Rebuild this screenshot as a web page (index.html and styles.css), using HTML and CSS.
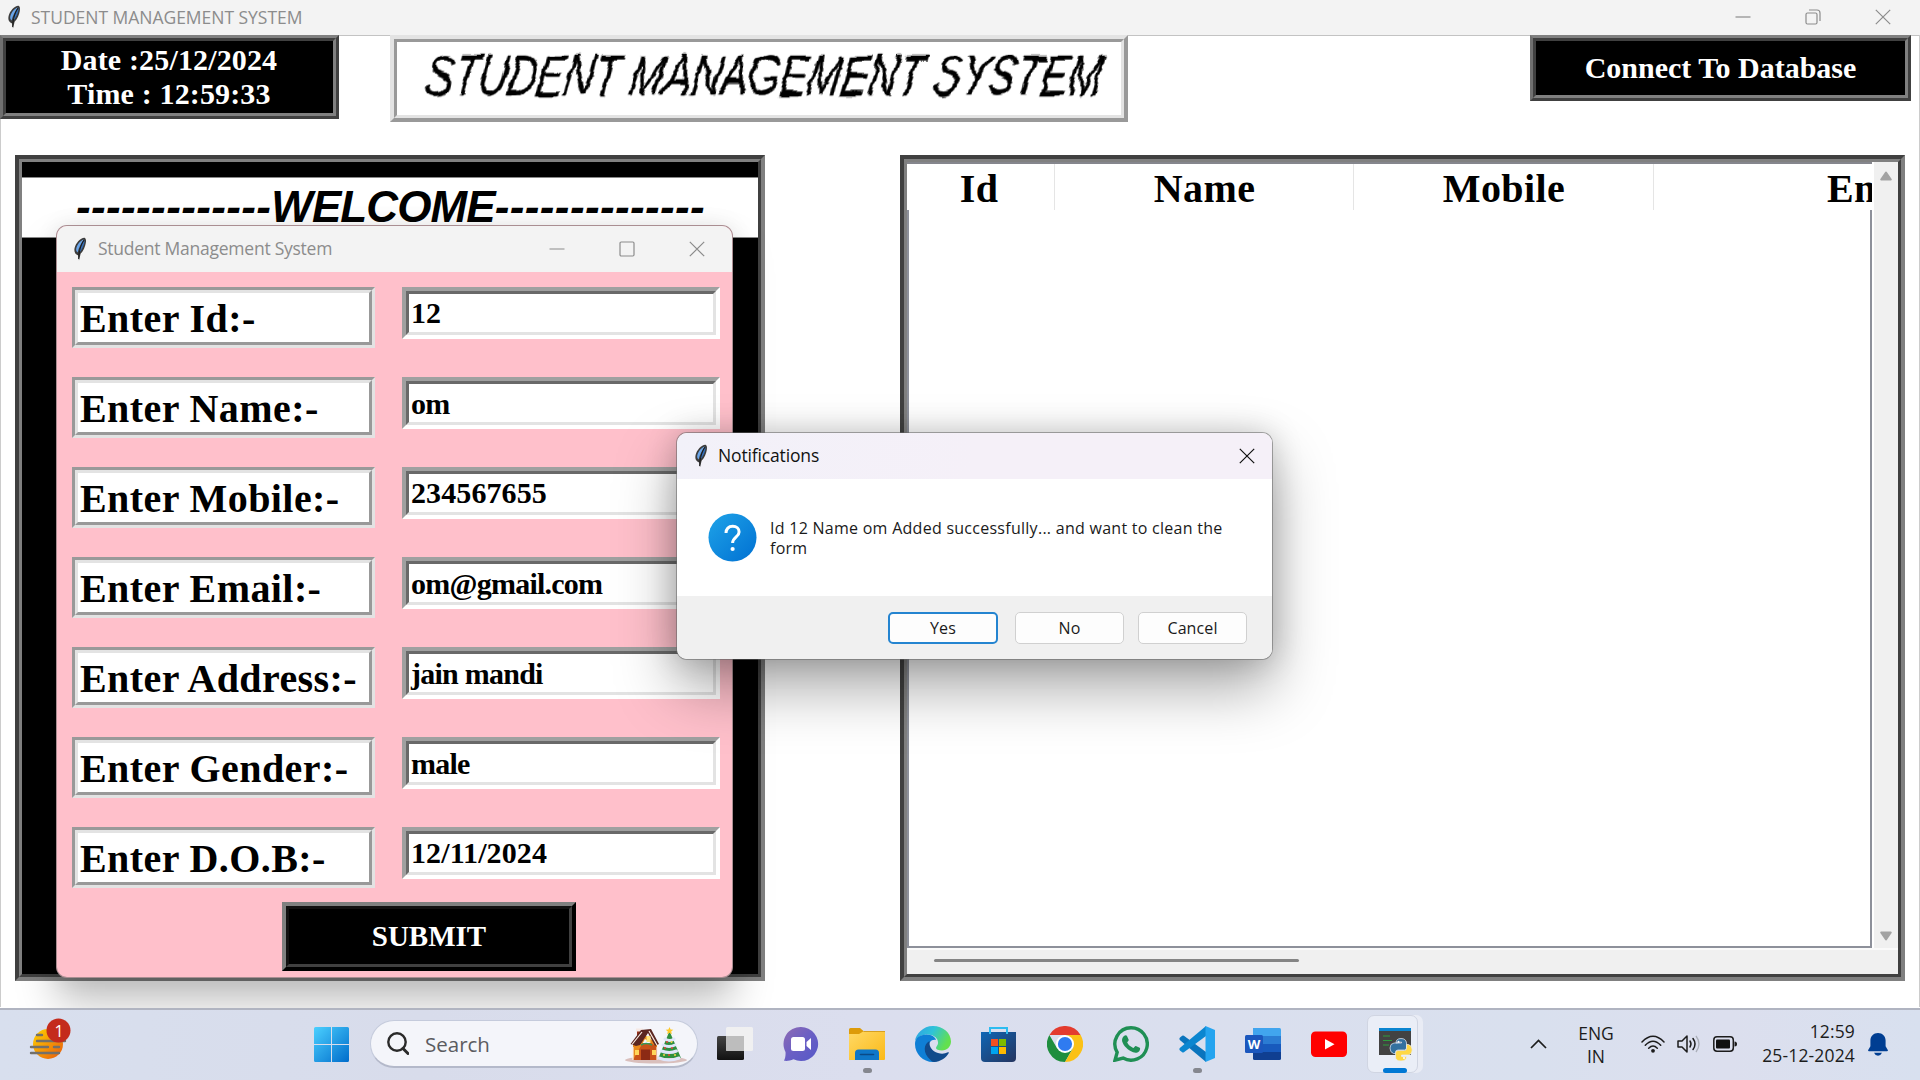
FILE: index.html
```html
<!DOCTYPE html>
<html lang="en">
<head>
<meta charset="utf-8">
<title>STUDENT MANAGEMENT SYSTEM</title>
<link rel="stylesheet" href="styles.css">
</head>
<body>
<svg class="defs" aria-hidden="true">
  <defs>
    <linearGradient id="gWin" x1="0" y1="0" x2="1" y2="1"><stop offset="0" stop-color="#4bd0ff"/><stop offset="1" stop-color="#006ccb"/></linearGradient>
    <linearGradient id="gSun" x1="0" y1="0" x2="1" y2="1"><stop offset="0" stop-color="#ffd400"/><stop offset="1" stop-color="#e8590c"/></linearGradient>
    <linearGradient id="gAsk" x1="0" y1="0" x2="1" y2="1"><stop offset="0" stop-color="#1fa3e8"/><stop offset="1" stop-color="#0070d2"/></linearGradient>
    <linearGradient id="gChat" x1="0" y1="0" x2="1" y2="1"><stop offset="0" stop-color="#8f6bb3"/><stop offset=".5" stop-color="#6a5fc4"/><stop offset="1" stop-color="#5558c8"/></linearGradient>
    <linearGradient id="gFolder" x1="0" y1="0" x2="1" y2="1"><stop offset="0" stop-color="#ffd966"/><stop offset="1" stop-color="#fbb917"/></linearGradient>
    <linearGradient id="gEdgeTop" x1="0" y1="0" x2="1" y2=".4"><stop offset="0" stop-color="#2f9fe6"/><stop offset=".5" stop-color="#2fc3d8"/><stop offset="1" stop-color="#63e04e"/></linearGradient>
    <linearGradient id="gStore" x1="0" y1="0" x2="1" y2="1"><stop offset="0" stop-color="#0f66b5"/><stop offset="1" stop-color="#25355f"/></linearGradient>
    <linearGradient id="gDark" x1="0" y1="0" x2="0" y2="1"><stop offset="0" stop-color="#444"/><stop offset="1" stop-color="#111"/></linearGradient>
    <filter id="scratchy" x="-5%" y="-20%" width="110%" height="140%"><feTurbulence type="fractalNoise" baseFrequency=".03 .07" numOctaves="2" seed="7"/><feDisplacementMap in="SourceGraphic" scale="9" xChannelSelector="R" yChannelSelector="G"/></filter>
    <symbol id="feather" viewBox="0 0 14 24">
      <path d="M11.6.8c1.3.6 1.700 2.500 1.200 5.200-.6 3.600-2.400 8-5.200 10.800L6 23.400l-.8-5C2 17.500.8 14.500 1.600 11 2.800 6.200 7.500.6 11.600.8z" fill="#3c3c3c"/>
      <path d="M10.800 2.500c-3.800 1-7.200 6-7.600 9.500-.2 1.500.4 2.700 1.400 3.400C6 10.500 8 6 10.800 2.500z" fill="#6aa5ea"/>
      <path d="M11.600 3C9 6.500 7 11 5.900 15.700c3-2.200 5.800-8.500 5.700-12.700z" fill="#356fb8"/>
      <path d="M10.900 3.200C8 8 6 13 5.600 22" fill="none" stroke="#111" stroke-width=".9"/>
    </symbol>
    <symbol id="minimize" viewBox="0 0 16 16"><path d="M.5 8h15" stroke="currentColor" stroke-width="1.200"/></symbol>
    <symbol id="maximize" viewBox="0 0 16 16"><rect x="1" y="1" width="14" height="14" rx="1.200" fill="none" stroke="currentColor" stroke-width="1.200"/></symbol>
    <symbol id="restore" viewBox="0 0 16 16"><rect x="1" y="4" width="11" height="11" rx="1.500" fill="none" stroke="currentColor" stroke-width="1.200"/><path d="M4 1h8a3 3 0 0 1 3 3v8" fill="none" stroke="currentColor" stroke-width="1.200"/></symbol>
    <symbol id="close" viewBox="0 0 16 16"><path d="M.8.8l14.400 14.400M15.200.8L.8 15.200" stroke="currentColor" stroke-width="1.200"/></symbol>
  </defs>
</svg>

<main class="app">
  <header class="titlebar">
    <svg class="feather"><use href="#feather"/></svg>
    <span class="caption caption-app">STUDENT MANAGEMENT SYSTEM</span>
    <span class="controls"><svg><use href="#minimize"/></svg><svg><use href="#restore"/></svg><svg><use href="#close"/></svg></span>
  </header>

  <div class="client">
    <div class="topline">
      <div class="ridge-dark clock"><div class="ridge-dark-in"><span>Date :25/12/2024</span><span>Time : 12:59:33</span></div></div>
      <div class="ridge-light banner"><div class="ridge-light-in">
        <svg viewBox="0 0 724 73" class="banner-text"><text x="26" y="53" textLength="676" lengthAdjust="spacingAndGlyphs" transform="translate(9 0) skewX(-9)" filter="url(#scratchy)">STUDENT MANAGEMENT SYSTEM</text></svg>
      </div></div>
      <div class="ridge-dark connect"><div class="ridge-dark-in">Connect To Database</div></div>
    </div>

    <div class="panels">
      <section class="groove left"><div class="groove-in">
        <h1 class="welcome">-------------<span>WELCOME</span>--------------</h1>
      </div></section>

      <section class="groove right"><div class="groove-in table">
        <div class="tree">
          <div class="heads"><span class="id">Id</span><span>Name</span><span>Mobile</span><span class="cut">Email</span></div>
          <div class="rows"></div>
        </div>
        <div class="vscroll">
          <svg viewBox="0 0 14 10"><path d="M7 1.500l4.800 7H2.200z" fill="#a3a3a3" stroke="#a3a3a3" stroke-width="2" stroke-linejoin="round"/></svg>
          <svg viewBox="0 0 14 10"><path d="M7 8.500l4.800-7H2.200z" fill="#a3a3a3" stroke="#a3a3a3" stroke-width="2" stroke-linejoin="round"/></svg>
        </div>
        <div class="hscroll"><div class="thumb"></div></div>
      </div></section>
    </div>
  </div>
</main>

<section class="window form-window">
  <header class="titlebar">
    <svg class="feather"><use href="#feather"/></svg>
    <span class="caption caption-form">Student Management System</span>
    <span class="controls"><svg><use href="#minimize"/></svg><svg><use href="#maximize"/></svg><svg><use href="#close"/></svg></span>
  </header>
  <div class="form">
    <div class="field"><div class="label"><div>Enter Id:-</div></div><div class="entry"><div>12</div></div></div>
    <div class="field"><div class="label"><div>Enter Name:-</div></div><div class="entry alpha"><div>om</div></div></div>
    <div class="field"><div class="label"><div>Enter Mobile:-</div></div><div class="entry"><div>234567655</div></div></div>
    <div class="field"><div class="label"><div>Enter Email:-</div></div><div class="entry alpha"><div>om@gmail.com</div></div></div>
    <div class="field"><div class="label"><div>Enter Address:-</div></div><div class="entry alpha"><div>jain mandi</div></div></div>
    <div class="field"><div class="label"><div>Enter Gender:-</div></div><div class="entry alpha"><div>male</div></div></div>
    <div class="field last"><div class="label"><div>Enter D.O.B:-</div></div><div class="entry"><div>12/11/2024</div></div></div>
    <div class="submit"><div>SUBMIT</div></div>
  </div>
</section>

<section class="window dialog">
  <header class="titlebar">
    <svg class="feather"><use href="#feather"/></svg>
    <span class="caption caption-dialog">Notifications</span>
    <span class="controls"><svg><use href="#close"/></svg></span>
  </header>
  <div class="message">
    <svg class="ask" viewBox="0 0 49 49"><circle cx="24.500" cy="24.500" r="24" fill="url(#gAsk)"/><path d="M18 20c0-4 2.600-6.800 6.700-6.800 3.800 0 6.400 2.300 6.400 5.700 0 5.100-6.500 5.500-6.500 11" fill="none" stroke="#fff" stroke-width="3"/><circle cx="24.600" cy="36" r="2.100" fill="#fff"/></svg>
    <p>Id 12 Name om Added successfully... and want to clean the<br>form</p>
  </div>
  <footer class="actions"><button class="btn primary">Yes</button><button class="btn no">No</button><button class="btn">Cancel</button></footer>
</section>

<nav class="taskbar">
  <div class="widgets">
    <svg viewBox="0 0 42 44"><circle cx="19" cy="26" r="15" fill="url(#gSun)"/><g stroke="#73706a" stroke-width="2.400" stroke-linecap="round"><path d="M8 17h5M8 23h28M2 29h17M25 29h5M2 35h28"/></g><circle cx="29.500" cy="12.500" r="12" fill="#c42b1c"/></svg>
    <span class="badge">1</span>
  </div>
  <svg class="start" viewBox="0 0 35 35"><g fill="url(#gWin)"><path d="M1.500 0H17v17H0V1.500A1.500 1.500 0 0 1 1.500 0zM18 0h15.500A1.500 1.500 0 0 1 35 1.500V17H18zM0 18h17v17H1.500A1.500 1.500 0 0 1 0 33.500zM18 18h17v15.500a1.500 1.500 0 0 1-1.500 1.500H18z"/></g></svg>
  <div class="search">
    <svg class="lens" viewBox="0 0 22 23"><circle cx="10" cy="10" r="8.700" fill="none" stroke="#2a2a2a" stroke-width="2.400"/><path d="M16 16.500l5 5" stroke="#2a2a2a" stroke-width="3" stroke-linecap="round"/></svg>
    <span>Search</span>
    <svg class="holiday" viewBox="0 0 64 37">
      <ellipse cx="32" cy="33" rx="31" ry="3.500" fill="#d9bfbc"/>
      <path d="M9 16h24v17H9z" fill="#c9531a"/><path d="M9 33V17l12-9 12 9v3L21 12z" fill="#e8891d"/>
      <path d="M13 3h5v9h-5z" fill="#96321b"/><path d="M12 1.500h7v3h-7z" fill="#f6e9e4"/>
      <path d="M6.500 17L17 3l10-1 8 15-4 2-7-13-8 12-4 1z" fill="#5b2620"/>
      <path d="M8 17.500L18 5M25 4l8 14M9 20v13M33 20v13" stroke="#fbeee6" stroke-width="1.200"/>
      <path d="M17 22.500h9V33h-9z" fill="#8c2a14"/><path d="M22.500 9h4v6h-4z" fill="#ffe67a"/><path d="M11 23h4v5h-4zM28 23h4v5h-4z" fill="#ffd65a"/><path d="M17 18q5-3 11 0" fill="none" stroke="#2f9c5b" stroke-width="1.500"/>
      <path d="M45.500 4L57 31H34.500z" fill="#2f8f3e"/>
      <g fill="none" stroke="#dfe6fa" stroke-width="3" stroke-linecap="round"><path d="M41 12q5 3 9 0M39 18q6 3 12 0M37.500 24q8 3 15 0M35 31q10 4 20 0"/></g>
      <g fill="#e2453a"><circle cx="43" cy="15" r="1"/><circle cx="48" cy="21" r="1"/><circle cx="41" cy="21" r="1"/><circle cx="45" cy="28" r="1.100"/></g><g fill="#f7d442"><circle cx="47.500" cy="15" r="1"/><circle cx="51" cy="28" r="1"/><circle cx="40" cy="28" r="1"/></g>
      <path d="M45.500 0l1.100 2.600 2.700.2-2.100 1.800.7 2.700-2.400-1.500-2.400 1.500.7-2.700-2.100-1.800 2.700-.2z" fill="#ffc928"/>
    </svg>
  </div>
  <div class="apps">
    <div class="cell"><svg viewBox="0 0 36 36"><rect x="0" y="10" width="27" height="24" rx="1.500" fill="url(#gDark)"/><rect x="9" y="1" width="27" height="24" rx="1.500" fill="#f1f1f1" fill-opacity=".97"/><path d="M9 10h18v15H10.500A1.500 1.500 0 0 1 9 23.500z" fill="#bdbdbd"/></svg></div>
    <div class="cell"><svg viewBox="0 0 36 36"><path d="M18 1a17 17 0 1 1-7.500 32.200C7 35 4 35 1 34.800c1-2.500 1.800-4.800 1.500-8.800A17 17 0 0 1 18 1z" fill="url(#gChat)"/><rect x="8" y="11" width="14" height="14" rx="2.500" fill="#fff"/><path d="M23.500 16l4.500-4v12l-4.500-4z" fill="#fff"/></svg></div>
    <div class="cell"><svg viewBox="0 0 36 36"><path d="M0 3.500A1.500 1.500 0 0 1 1.500 2H11l4 3.500L11 9H0z" fill="#dd9b09"/><path d="M0 8h10l5-3h21v28a1 1 0 0 1-1 1H0z" fill="url(#gFolder)"/><path d="M15 5h21v1H14z" fill="#d7a020"/><path d="M6 34V27a3.500 3.500 0 0 1 3.500-3.500h17A3.500 3.500 0 0 1 30 27v7z" fill="#0f77c8"/><path d="M11.500 28.500h13" stroke="#0b4a86" stroke-width="1.600" stroke-linecap="round"/></svg><i class="dot"></i></div>
    <div class="cell"><svg viewBox="0 0 36 36"><path d="M18 0C8 0 .8 8 0 15c4-6 11-7.500 16-6 5 1.300 7.500 5 7 8.500-.2 2-2 3-2 4.500 0 1.500 2.500 2.500 6 2.500 5 0 9-4 9-9C36 7 28 0 18 0z" fill="url(#gEdgeTop)"/><path d="M0 18C0 12 5 8.500 11.500 8.500c5.500 0 9 3 9.500 5.500-5-1-7 3-7 6 0 6 5 12 12 12.500C23.500 35 21 36 18 36 8 36 0 28 0 18z" fill="#0f7fd6"/><path d="M14.500 15c-6 3-7 12 1 19 1 1 2.200 2 3.500 2 6.500-.3 12-4 14.800-9 .3-.7-.3-1-.9-.7-3 1.500-6.300 2-9.900.7-6-2-9-6-8.500-12z" fill="#114a8b"/></svg></div>
    <div class="cell"><svg viewBox="0 0 36 36"><path d="M0 6h35v26a4 4 0 0 1-4 4H4a4 4 0 0 1-4-4z" fill="url(#gStore)"/><path d="M9 8V2h17v6" fill="none" stroke="#2dbcf0" stroke-width="2"/><path d="M10 13h7v7h-7z" fill="#f25022"/><path d="M18 13h7v7h-7z" fill="#7fba00"/><path d="M10 21h7v7h-7z" fill="#00a4ef"/><path d="M18 21h7v7h-7z" fill="#ffb900"/></svg></div>
    <div class="cell"><svg viewBox="0 0 36 36"><path d="M2.400 9A18 18 0 0 1 33.600 9H18z" fill="#e33b2e"/><path d="M2.400 9A18 18 0 0 0 18 36l7.800-13.500-15.600 0z" fill="#1f8e3e"/><path d="M33.600 9A18 18 0 0 1 18 36l7.800-13.500L27 9z" fill="#fbc116"/><path d="M18 9h15.600L27 20z" fill="#fbc116"/><circle cx="18" cy="18" r="9" fill="#fff"/><circle cx="18" cy="18" r="7.100" fill="#2f7bf0"/></svg></div>
    <div class="cell"><svg viewBox="0 0 36 36"><path d="M18 1.800a16.200 16.200 0 1 1-7.900 30.300L2 34.200l2.200-7.900A16.200 16.200 0 0 1 18 1.800z" fill="none" stroke="#1f8f54" stroke-width="3.400"/><path d="M11 10c1-1 2.500-1 3 0l1.700 3.800c.3.800-1.500 2.300-1.500 2.800 1.200 2.400 3.300 4.200 6 5.300.7 0 1.900-2.200 2.600-2l3.900 1.900c.8.500.4 2.500-.7 3.600-1.400 1.300-3.600 1.600-5.900.8C14.500 24 10.500 19.700 9.200 15.500 8.600 13.500 9.500 11.200 11 10z" fill="#1f8f54"/></svg></div>
    <div class="cell"><svg viewBox="0 0 36 36"><path d="M1 11.500l2.200-1.800q.8-.6 1.700 0L27 26v10L.8 14q-.9-1.300.2-2.500z" fill="#0a74bd"/><path d="M1 24.500l2.200 1.800q.8.600 1.700 0L27 10V0L.8 22q-.9 1.300.2 2.500z" fill="#0b86d0"/><path d="M26.500 0L36 4v28l-9.500 4z" fill="#25a4ef"/></svg><i class="dot"></i></div>
    <div class="cell"><svg viewBox="0 0 36 36"><path d="M8 2h26.500A1.500 1.500 0 0 1 36 3.500V10H8z" fill="#41a5ee"/><path d="M8 10h28v8H8z" fill="#2b7cd3"/><path d="M8 18h28v8H8z" fill="#185abd"/><path d="M8 26h28v6.500a1.500 1.500 0 0 1-1.500 1.500H9.500A1.500 1.500 0 0 1 8 32.500z" fill="#103f91"/><rect x="0" y="9" width="18" height="18" rx="1.500" fill="#1b57bd"/><text x="9" y="23" class="word-w">W</text></svg></div>
    <div class="cell"><svg viewBox="0 0 36 36"><rect x="0" y="5.500" width="36" height="25.500" rx="4.500" fill="#f00"/><path d="M14 13v10.500l9.500-5.200z" fill="#fff"/></svg></div>
    <div class="cell active"><div class="tile"></div><svg viewBox="0 0 36 36"><path d="M2 2h32v27H2z" fill="#424242"/><path d="M2 2h32v3H2z" fill="#0a84d0"/><path d="M6 10h7M6 14.500h9M6 19h6" stroke="#2e9b3c" stroke-width="1.200"/><path d="M19 17q0-4.500 5-4.500t5.500 4.500v5q0 2-2 2h-6.500q-2.500 0-2.500 2.500v1h-2q-3.500-1-3.500-5.500t4-5h7.500v-1z" fill="#34719f" stroke="#e9edf6" stroke-width=".7"/><path d="M29.500 18.500h2q3.700 1 3.700 5.500t-4 5h-6.700v1.500h5q0 4.500-5.500 4.500t-5.500-4v-4q0-2.500 2.500-2.500h6.500q2 0 2-2z" fill="#ffd845" stroke="#e9edf6" stroke-width=".7"/><circle cx="21.500" cy="15.800" r="1" fill="#fff"/><circle cx="27" cy="32" r="1" fill="#fff"/></svg><i class="dot"></i></div>
  </div>
  <div class="tray">
    <svg class="chev" viewBox="0 0 17 10"><path d="M1 9l7.500-7.500L16 9" fill="none" stroke="#1c1c1c" stroke-width="1.700"/></svg>
    <div class="lang"><span>ENG</span><span>IN</span></div>
    <svg class="wifi" viewBox="0 0 24 18"><g fill="none" stroke="#1c1c1c" stroke-width="1.500" stroke-linecap="round"><path d="M1 7Q12-4.500 23 7M4.300 10.300q7.700-8 15.400 0M7.700 13.300q4.300-4.500 8.600 0"/></g><circle cx="12" cy="15.800" r="1.900" fill="#1c1c1c"/></svg>
    <svg class="sound" viewBox="0 0 24 20"><path d="M1 7h4l5-5v16l-5-5H1z" fill="none" stroke="#1c1c1c" stroke-width="1.500" stroke-linejoin="round"/><path d="M13 7q2 3 0 6M16 4.500q4 5.500 0 11" fill="none" stroke="#1c1c1c" stroke-width="1.500" stroke-linecap="round"/><path d="M19 2q6 8 0 16" fill="none" stroke="#aaaeb8" stroke-width="1.300"/></svg>
    <svg class="batt" viewBox="0 0 24 16"><rect x=".8" y=".8" width="19.500" height="14.400" rx="3.200" fill="none" stroke="#1c1c1c" stroke-width="1.500"/><rect x="3" y="3.500" width="14" height="9" rx="1" fill="#111"/><path d="M21.500 5.500q2.500 0 2.500 2.500t-2.500 2.500z" fill="#1c1c1c"/></svg>
    <div class="time"><span>12:59</span><span class="day">25-12-2024</span></div>
    <svg class="bell" viewBox="0 0 20 23"><path d="M10 0c4.500 0 7.600 3.300 7.600 7.500v5.800l2.200 3.700c.3.800 0 1.300-.8 1.300H1c-.8 0-1.100-.5-.8-1.300l2.200-3.700V7.500C2.400 3.300 5.500 0 10 0z" fill="#003e92"/><path d="M6 19.800h8q-1.300 3-4 3t-4-3z" fill="#003e92"/></svg>
  </div>
</nav>
</body>
</html>
```
FILE: styles.css
```css
* { box-sizing: border-box; }
body {
  margin: 0;
  width: 1920px;
  height: 1080px;
  overflow: hidden;
  background: #fff;
  font-family: "Open Sans", "Noto Sans", sans-serif;
}
.defs { position: absolute; width: 0; height: 0; }

/* window chrome */
.titlebar { display: flex; align-items: center; color: #8c8c8c; background: #f3f3f3; }
.feather { width: 14px; height: 24px; flex: none; }
.caption { white-space: nowrap; font-size: 17.5px; line-height: 24px; }
.controls { display: flex; margin-left: auto; }
.controls svg { width: 16px; height: 16px; margin-left: 54px; }

.app { height: 1008px; }
.app > .titlebar { height: 36px; padding: 0 29px 2px 7px; border-bottom: 1px solid #c3c3c3; }
.caption-app { margin-left: 10px; letter-spacing: -0.03px; }
.client { height: 972px; border: 1px solid #ccc; border-width: 0 1px; }
.topline { display: flex; align-items: flex-start; margin: -1px 0 0 -1px; height: 120px; position: relative; }

/* Tk reliefs: outer edge on the box, inner edge on its child */
.ridge-dark { border: 3px solid; border-color: #808080 #404040 #404040 #707070; }
.ridge-dark-in {
  height: 100%; display: flex; flex-direction: column; align-items: center; justify-content: center;
  border: 3px solid; border-color: #404040 #808080 #808080 #404040;
  background: #000; color: #fff;
  font: bold 30px/34px "Liberation Serif", serif; white-space: pre;
}
.clock { width: 339px; height: 84px; letter-spacing: 0.15px; }
.clock .ridge-dark-in { padding-right: 1px; }
.connect { width: 381px; height: 66px; margin-left: 402px; }
.ridge-light { border: 4px solid; border-color: #e3e3e3 #999 #999 #e3e3e3; }
.ridge-light-in { height: 100%; border: 3px solid; border-color: #999 #e3e3e3 #e3e3e3 #999; background: #fff; }
.banner { width: 738px; height: 87px; margin-left: 51px; }
.banner-text { display: block; width: 724px; height: 73px; }
.banner-text text { font: italic 400 56px "Liberation Sans Narrow", "Liberation Sans", sans-serif; fill: #000; stroke: #000; stroke-width: 0.5px; }

.groove { border: 4px solid; border-color: #404040 #808080 #808080 #404040; height: 826px; }
.groove-in { height: 100%; border: 3px solid; border-color: #808080 #404040 #404040 #808080; }
.panels { display: flex; margin-left: 14px; }
.left { width: 750px; }
.left .groove-in { background: #000; padding-top: 15px; }
.welcome {
  margin: 0; height: 61px; padding: 4px 0 0 54px; border: 1px solid #888; border-width: 1px 0;
  background: #fff; color: #000; white-space: nowrap; letter-spacing: 0.37px;
  font: italic bold 44px/50px "Liberation Sans", sans-serif;
}
.welcome span { letter-spacing: -0.9px; }
.right { width: 1005px; margin-left: 135px; }
.table { display: grid; grid-template: 786px 1fr / 965px 1fr; background: #f0f0f0; }
.tree { display: grid; grid-template-rows: 46px 1fr; min-width: 0; overflow: hidden; border-top: 2px solid #85868d; background: #fff; }
.heads { display: grid; grid-template-columns: 148px 299px 300px 218px; font: bold 40px/50px "Liberation Serif", serif; letter-spacing: 0.4px; text-align: center; }
.heads span { height: 46px; padding-left: 1px; border-right: 1px solid #e5e5e5; overflow: hidden; }
.heads .id { padding-right: 4px; }
.heads .cut { text-align: left; padding-left: 173px; border: 0; }
.rows { border: 2px solid #8d909a; border-top: 0; }
.vscroll { display: flex; flex-direction: column; justify-content: space-between; align-items: center; padding: 9px 0 7px; border-left: 2px solid #fff; }
.vscroll svg { width: 14px; height: 10px; }
.hscroll { grid-column: 1 / 3; border-top: 2px solid #fafafa; padding: 9px 0 0 27px; }
.thumb { width: 365px; height: 3px; border-radius: 2px; background: #858585; }

.window { position: absolute; border-radius: 11px; overflow: hidden; background-clip: padding-box; border: 1px solid rgba(100,100,100,.55); }
.window .titlebar { height: 46px; }
.window .caption { padding-bottom: 2px; }

/* entry form */
.form-window { left: 56px; top: 225px; width: 677px; height: 753px; background: #ffc0cb; box-shadow: 0 24px 40px rgba(0,0,0,.25), 0 0 22px rgba(0,0,0,.08); }
.form-window .titlebar { padding: 0 27px 0 16px; }
.caption-form { margin-left: 11px; letter-spacing: -0.25px; }
.form { padding: 15px 0 0 15px; }
.field { display: flex; align-items: flex-start; gap: 27px; height: 90px; }
.field.last { height: 75px; }
.label { width: 303px; height: 61px; border: 3px solid; border-color: #999 #e3e3e3 #e3e3e3 #999; }
.label div {
  height: 100%; padding: 2px 0 0 2px; border: 3px solid; border-color: #e3e3e3 #999 #999 #e3e3e3; background: #fff;
  font: bold 40px/48px "Liberation Serif", serif; letter-spacing: 0.42px; white-space: nowrap;
}
.entry { width: 318px; height: 52px; border: 4px solid; border-color: #a0a0a0 #fff #fff #a0a0a0; }
.entry div {
  height: 100%; padding-left: 2px; border: 3px solid; border-color: #696969 #e3e3e3 #e3e3e3 #696969; background: #fff;
  font: bold 30px/38px "Liberation Serif", serif; letter-spacing: 0.1px; white-space: nowrap;
}
.entry.alpha div { letter-spacing: -0.75px; line-height: 39px; }
.submit { width: 294px; height: 69px; margin-left: 210px; border: 4px solid; border-color: #808080 #000 #000 #808080; }
.submit div {
  height: 100%; border: 3px solid; border-color: #111 #404040 #404040 #111; background: #000; color: #fff; text-align: center;
  font: bold 29px/54px "Liberation Serif", serif;
}

/* message box */
.dialog { left: 676px; top: 432px; width: 597px; height: 228px; background-color: #fff; box-shadow: 0 28px 60px rgba(0,0,0,.34), 0 0 30px rgba(0,0,0,.18); }
.dialog .titlebar { padding: 0 17px 0 17px; color: #111; background: linear-gradient(100deg, #f2f1f9, #f5f0f8 50%); }
.caption-dialog { margin-left: 10px; letter-spacing: -0.15px; }
.message { display: flex; height: 117px; padding: 34px 0 0 31px; }
.ask { width: 49px; height: 49px; }
.message p { margin: 6px 0 0 13px; font-size: 16px; line-height: 19.5px; letter-spacing: 0.27px; white-space: nowrap; color: #1a1a1a; }
.actions { display: flex; height: 63px; padding: 16px 25px 0; justify-content: flex-end; background: #f0f0f0; }
.btn { width: 109px; height: 32px; margin: 0 0 0 14px; padding: 0; border: 1px solid #d0d0d0; border-radius: 5px; background: #fdfdfd; font: 16px/30px "Open Sans", "Noto Sans", sans-serif; letter-spacing: 0.1px; color: #1a1a1a; }
.btn.no { margin-left: 17px; }
.btn.primary { width: 110px; border: 2px solid #2484d0; line-height: 28px; }

/* taskbar */
.taskbar { position: relative; z-index: 5; display: flex; height: 72px; border-top: 2px solid #b0b4c1; background: linear-gradient(90deg, #d8dfee, #d8dceb 22%, #dbdeee 45%, #d9e0ee 80%, #dcdfee 90%, #d8e0ef); color: #1c1c1c; }
.widgets { position: relative; width: 42px; height: 44px; margin: 8px 0 0 29px; }
.widgets svg { width: 42px; height: 44px; display: block; }
.badge { position: absolute; left: 18px; top: 1px; width: 24px; text-align: center; font-size: 16px; line-height: 24px; color: #fff; }
.start { width: 35px; height: 35px; margin: 17px 0 0 243px; }
.search { display: flex; align-items: center; width: 328px; height: 48px; margin: 10px 0 0 21px; padding: 0 9px 0 16px; border: 1px solid #c5cbdc; border-bottom: 2px solid #b4b9ca; border-radius: 24px; background: #f4f5fa; font-size: 20.5px; color: #5b5b60; }
.lens { width: 22px; height: 23px; }
.search span { margin-left: 16px; }
.holiday { width: 64px; height: 37px; margin: 4px 0 0 auto; }
.apps { display: flex; margin-left: 4px; }
.cell { position: relative; width: 66px; padding: 16px 0 0 15px; }
.cell > svg { position: relative; display: block; width: 36px; height: 36px; }
.dot { position: absolute; left: 29px; top: 58px; width: 9px; height: 5px; border-radius: 3px; background: #85878f; }
.active .dot { left: 21px; width: 24px; background: #0078d4; }
.tile { position: absolute; left: 5px; top: 5px; width: 51px; height: 58px; border-radius: 7px; background: #eaeef7; border: 1px solid #d0d5e2; box-shadow: 5px 0 0 #e9ecf5; }
.word-w { font: bold 13px "Open Sans", sans-serif; fill: #fff; text-anchor: middle; }
.tray { display: flex; flex: none; margin-left: 102px; }
.tray svg { display: block; }
.chev { width: 17px; height: 10px; margin-top: 29px; }
.lang { display: flex; flex-direction: column; width: 50px; margin: 12px 0 0 24px; text-align: center; font-size: 17.5px; line-height: 23px; }
.wifi { width: 24px; height: 18px; margin: 25px 0 0 20px; }
.sound { width: 24px; height: 20px; margin: 24px 0 0 12px; }
.batt { width: 24px; height: 16px; margin: 26px 0 0 12px; }
.time { display: flex; flex-direction: column; align-items: flex-end; width: 110px; margin: 9px 0 0 8px; font-size: 17.5px; line-height: 24px; letter-spacing: 0.15px; white-space: nowrap; }
.bell { width: 20px; height: 23px; margin: 23px 0 0 13px; }
```
